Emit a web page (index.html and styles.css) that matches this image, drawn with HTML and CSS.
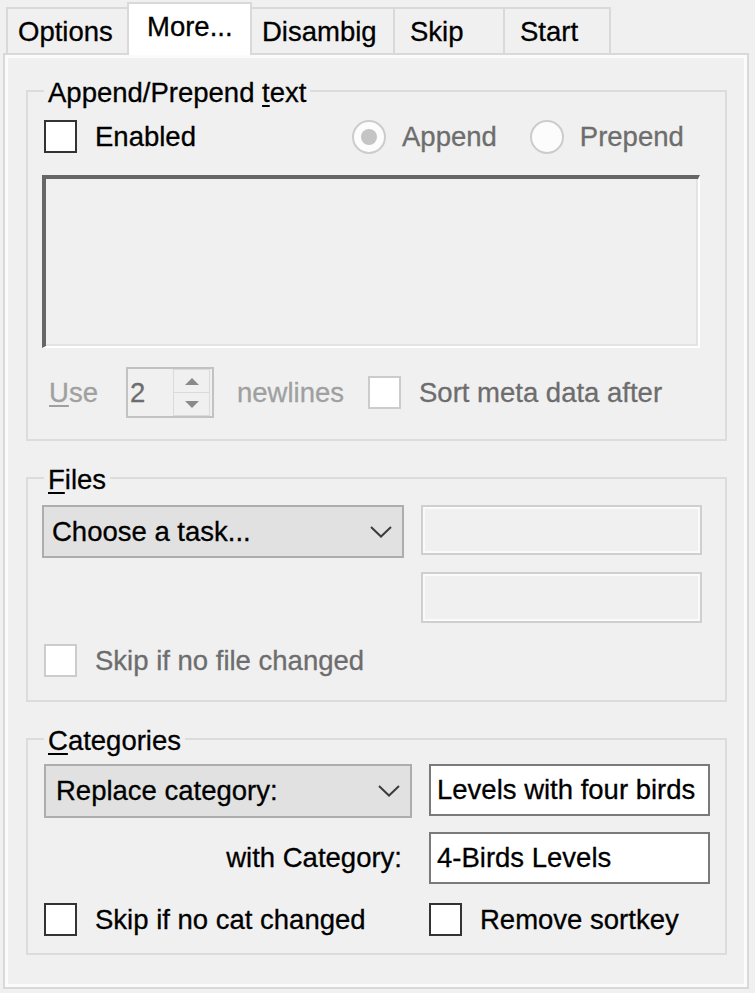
FILE: index.html
```html
<!DOCTYPE html>
<html>
<head>
<meta charset="utf-8">
<link rel="stylesheet" href="styles.css">
</head>
<body>
<div class="window">
  <div class="tabs">
    <div class="tab t-options">Options</div>
    <div class="tab sel t-more">More...</div>
    <div class="tab t-dis">Disambig</div>
    <div class="tab t-skip">Skip</div>
    <div class="tab t-start">Start</div>
  </div>
  <div class="panel">
    <fieldset class="group g1">
      <legend>Append/Prepend <u>t</u>ext</legend>
      <div class="row r-enabled">
        <label class="check w-enabled"><span class="box"></span><span>Enabled</span></label>
        <span class="radio dis"><span class="circle on"></span><span class="rtext">Append</span></span>
        <span class="radio dis r-pre"><span class="circle"></span><span class="rtext">Prepend</span></span>
      </div>
      <div class="textarea"></div>
      <div class="row r-use">
        <span class="lbl-dim w-use"><u>U</u>se</span>
        <span class="spinner">
          <span class="spin-val">2</span>
          <span class="spin-btns">
            <span class="spin-btn"><span class="arrow up"></span></span>
            <span class="spin-btn"><span class="arrow down"></span></span>
          </span>
        </span>
        <span class="lbl-dim w-newlines">newlines</span>
        <label class="check dis-box"><span class="box"></span><span class="txt-mid">Sort meta data after</span></label>
      </div>
    </fieldset>

    <fieldset class="group g2">
      <legend><u>F</u>iles</legend>
      <div class="grid2">
        <div class="combo c-task"><span>Choose a task...</span>
          <svg class="chev" width="22" height="12" viewBox="0 0 22 12"><polyline points="1,1 11,10.5 21,1" fill="none" stroke="#3c3c3c" stroke-width="2"/></svg>
        </div>
        <div class="tb dis tb1"></div>
        <div class="tb dis tb2"></div>
        <label class="check dis-box skipfile"><span class="box"></span><span class="txt-mid">Skip if no file changed</span></label>
      </div>
    </fieldset>

    <fieldset class="group g3">
      <legend><u>C</u>ategories</legend>
      <div class="grid3">
        <div class="combo c-rep"><span>Replace category:</span>
          <svg class="chev" width="22" height="12" viewBox="0 0 22 12"><polyline points="1,1 11,10.5 21,1" fill="none" stroke="#3c3c3c" stroke-width="2"/></svg>
        </div>
        <div class="tb on tb3">Levels with four birds</div>
        <div class="withcat">with Category:</div>
        <div class="tb on tb4">4-Birds Levels</div>
        <label class="check cb-skipcat"><span class="box"></span><span>Skip if no cat changed</span></label>
        <label class="check cb-sortkey"><span class="box"></span><span>Remove sortkey</span></label>
      </div>
    </fieldset>
  </div>
</div>
</body>
</html>
```
FILE: styles.css
```css
* { box-sizing: border-box; }
html, body { margin: 0; padding: 0; }
body {
  background: #f0f0f0;
  font-family: "Liberation Sans", Arial, sans-serif;
  font-size: 27.5px;
  color: #000;
  width: 755px;
  height: 993px;
  overflow: hidden;
  -webkit-text-stroke: 0.3px currentColor;
}
u { text-decoration-thickness: 2px; text-underline-offset: 3px; }

.tabs {
  display: flex;
  align-items: flex-end;
  height: 53px;
  padding-left: 6px;
}
.tab {
  height: 46px;
  border: 2px solid #d9d9d9;
  border-bottom: none;
  background: #f0f0f0;
  padding-left: 10px;
  line-height: 46px;
  margin-left: -2px;
  white-space: nowrap;
}
.t-options { margin-left: 0; width: 123px; }
.t-more { width: 125px; }
.t-dis { width: 145px; }
.t-skip { width: 112px; padding-left: 15px; }
.t-start { width: 108px; padding-left: 15px; }
.tab.sel {
  height: 53px;
  margin-bottom: -2px;
  background: #fff;
  padding-left: 18px;
  line-height: 46px;
  position: relative;
  z-index: 2;
  border-color: #d9d9d9;
}

.panel {
  margin-left: 3px;
  width: 746px;
  height: 936px;
  border: 2px solid #d9d9d9;
  box-shadow: inset 0 0 0 3px #fbfbfb;
  padding-top: 21px;
  position: relative;
  z-index: 1;
}

.group {
  margin: 0 0 0 21px;
  width: 701px;
  border: 2px solid #dcdcdc;
  padding: 0 16px;
  min-inline-size: 0;
}
.group legend {
  padding: 0 4px;
  line-height: 34px;
  height: 30px;
  margin-left: 0;
}
.g1 { padding-top: 14px; padding-bottom: 21px; }
.g2 { margin-top: 22px; padding-top: 12px; padding-bottom: 23px; }
.g3 { margin-top: 22px; padding-top: 10px; padding-bottom: 17px; }

.row { display: flex; align-items: center; }
.r-enabled { height: 33px; }

.check { display: flex; align-items: center; white-space: nowrap; }
.check .box {
  width: 33px; height: 33px;
  border: 2px solid #333;
  background: #fff;
  margin-right: 18px;
  flex: none;
}
.check.dis-box .box { border-color: #cccccc; }
.w-enabled { width: 308px; }
.txt-mid { color: #6d6d6d; }

.radio { display: flex; align-items: center; color: #6d6d6d; white-space: nowrap; }
.radio .circle {
  width: 34px; height: 34px;
  border-radius: 50%;
  border: 2px solid #cccccc;
  background: #fcfcfc;
  margin-right: 16px;
  display: flex; align-items: center; justify-content: center;
}
.radio .circle.on::after {
  content: "";
  width: 16px; height: 16px;
  border-radius: 50%;
  background: #c4c4c4;
}
.r-pre { margin-left: 33px; }

.textarea {
  margin-top: 22px;
  margin-left: -2px;
  width: 658px;
  height: 173px;
  border-top: 4px solid #666;
  border-left: 4px solid #666;
  border-right: 2px solid #fff;
  border-bottom: 2px solid #fff;
  box-shadow: inset -2px -2px 0 #e3e3e3;
  background: #f0f0f0;
}

.r-use { margin-top: 19px; height: 51px; }
.lbl-dim { color: #a0a0a0; white-space: nowrap; }
.w-use { width: 82px; padding-left: 5px; }
.w-newlines { width: 154px; padding-left: 23px; }

.spinner {
  width: 88px; height: 51px;
  border: 2px solid #c2c2c2;
  background: #f0f0f0;
  display: flex;
  align-items: stretch;
}
.spin-val {
  flex: 1;
  color: #6d6d6d;
  padding-left: 2px;
  line-height: 47px;
}
.spin-btns {
  width: 37px;
  display: flex;
  flex-direction: column;
  margin: 0 2px 0 0;
}
.spin-btn {
  flex: 1;
  border: 1px solid #dadada;
  display: flex; align-items: center; justify-content: center;
}
.spin-btn + .spin-btn { border-top: none; }
.arrow { width: 0; height: 0; border-left: 7px solid transparent; border-right: 7px solid transparent; }
.arrow.up { border-bottom: 7px solid #8a8a8a; }
.arrow.down { border-top: 7px solid #8a8a8a; }

.combo {
  display: flex; align-items: center; justify-content: space-between;
  background: #e1e1e1;
  border: 2px solid #adadad;
  padding: 0 10px 0 8px;
  white-space: nowrap;
}
.c-task { height: 53px; margin-left: -2px; }
.c-rep { height: 54px; padding-left: 10px; }

.tb { border: 2px solid #7a7a7a; background: #fff; padding-left: 6px; white-space: nowrap; display: flex; align-items: center; }
.tb.dis { border-color: #cfcfcf; background: #f0f0f0; box-shadow: inset 0 0 0 2px #fafafa; }

.grid2 {
  display: grid;
  grid-template-columns: 362px 281px;
  column-gap: 17px;
  margin-left: -2px;
}
.tb1 { height: 50px; grid-column: 2; grid-row: 1; align-self: start; }
.c-task { grid-column: 1; grid-row: 1; margin-left: 0; }
.tb2 { height: 51px; grid-column: 2; grid-row: 2; margin-top: 14px; }
.skipfile { grid-column: 1 / 3; grid-row: 3; margin-top: 21px; margin-left: 2px; }

.grid3 {
  display: grid;
  grid-template-columns: 368px 281px;
  column-gap: 17px;
}
.tb3 { height: 52px; align-self: start; }
.withcat { text-align: right; padding-right: 10px; align-self: center; margin-top: 14px; }
.tb4 { height: 52px; margin-top: 14px; }
.cb-skipcat, .cb-sortkey { margin-top: 19px; }
```
